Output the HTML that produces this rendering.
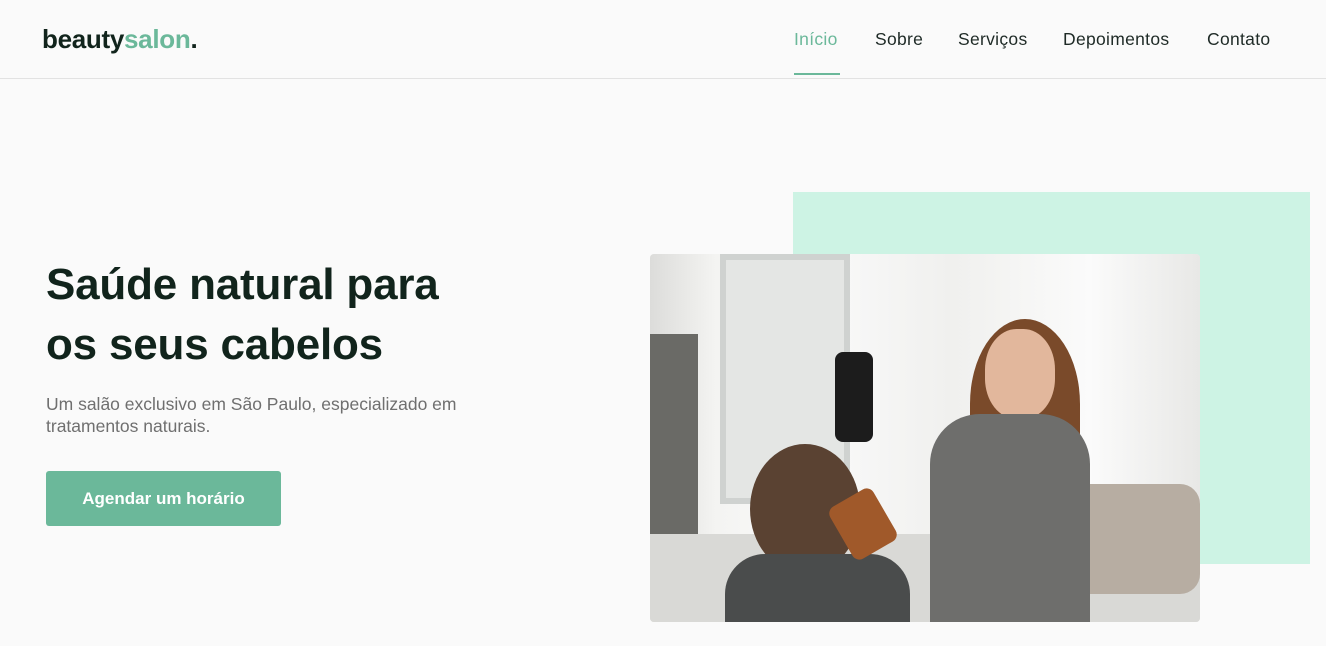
<!DOCTYPE html>
<html><head><meta charset="utf-8"><style>
*{margin:0;padding:0;box-sizing:border-box}
body{width:1326px;height:646px;background:#fafafa;font-family:"Liberation Sans",sans-serif;position:relative;overflow:hidden;color:#11241c}
.hdr{position:absolute;left:0;top:0;width:1326px;height:79px;border-bottom:1px solid #e2e2e2}
.logo{position:absolute;left:42px;top:24px;font-size:26px;font-weight:bold;letter-spacing:-0.3px;color:#11241c}
.logo span{color:#6bb89a}
.nav a{position:absolute;top:29px;font-size:17.5px;letter-spacing:0.3px;color:#1e2a26;text-decoration:none}
.act{color:#6bb89a!important}
.ul{position:absolute;left:794px;top:73px;width:46px;height:2px;background:#6bb89a}
h1{position:absolute;left:46px;top:255px;font-size:44px;line-height:60px;font-weight:bold;color:#11241c;letter-spacing:-0.2px}
p{position:absolute;left:46px;top:393px;font-size:17.5px;line-height:22px;color:#6f6f6f;width:460px}
.btn{position:absolute;left:46px;top:471px;width:235px;height:55px;background:#6bb89a;border-radius:3px;color:#fff;font-weight:bold;font-size:17px;text-align:center;line-height:55px}
.green{position:absolute;left:793px;top:192px;width:517px;height:372px;background:#cdf3e4}
.img{position:absolute;left:650px;top:254px;width:550px;height:368px;border-radius:4px;overflow:hidden;background:#ecedeb}
.img div{position:absolute}
</style></head><body>
<div class="hdr"><div class="logo">beauty<span>salon</span>.</div>
<div class="nav"><a class="act" style="left:794px">Início</a><a style="left:875px">Sobre</a><a style="left:958px">Serviços</a><a style="left:1063px">Depoimentos</a><a style="left:1207px">Contato</a></div>
<div class="ul"></div></div>
<h1>Saúde natural para<br>os seus cabelos</h1>
<p>Um salão exclusivo em São Paulo, especializado em tratamentos naturais.</p>
<div class="btn">Agendar um horário</div>
<div class="green"></div>
<div class="img">
<div style="left:0;top:0;width:550px;height:368px;background:linear-gradient(90deg,#dcdcda 0,#f4f4f2 12%,#fafafa 30%,#f0f0ee 55%,#fbfbfb 80%,#e8e8e6 100%)"></div>
<div style="left:0;top:80px;width:48px;height:200px;background:#6a6a66"></div>
<div style="left:70px;top:0;width:130px;height:250px;background:#e4e6e4;border:6px solid #cfd2d0"></div>
<div style="left:0;top:280px;width:550px;height:88px;background:#d9d9d6"></div>
<div style="left:420px;top:230px;width:130px;height:110px;background:#b7ada2;border-radius:20px"></div>
<div style="left:100px;top:190px;width:110px;height:130px;background:#5a4232;border-radius:50%"></div>
<div style="left:75px;top:300px;width:185px;height:80px;background:#4a4c4c;border-radius:40px 40px 0 0"></div>
<div style="left:185px;top:98px;width:38px;height:90px;background:#1c1c1c;border-radius:8px"></div>
<div style="left:188px;top:240px;width:50px;height:60px;background:#a0592a;border-radius:8px;transform:rotate(-30deg)"></div>
<div style="left:320px;top:65px;width:110px;height:170px;background:#7a4a2a;border-radius:50% 50% 30% 30%"></div>
<div style="left:335px;top:75px;width:70px;height:90px;background:#e2b79c;border-radius:45%"></div>
<div style="left:280px;top:160px;width:160px;height:208px;background:#6e6e6c;border-radius:50px 50px 0 0"></div>
</div>
</body></html>
